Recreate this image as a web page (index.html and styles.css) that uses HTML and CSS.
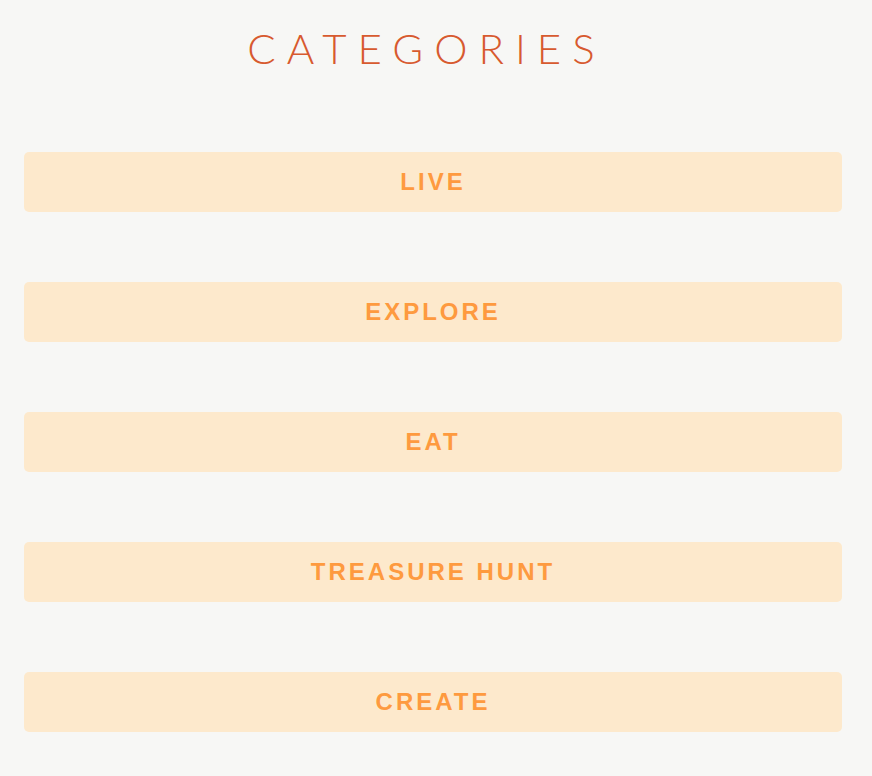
FILE: index.html
```html
<!DOCTYPE html>
<html>

<head>
    <meta name="viewport" content="width=device-width, initial-scale=1.0">
    <link rel="stylesheet" href="styles.css">
</head>

<body>
    <div class="page">
        <h1 class="title">CATEGORIES</h1>
        <div class="category-list">
            <button class="category">LIVE</button>
            <button class="category">EXPLORE</button>
            <button class="category">EAT</button>
            <button class="category">TREASURE HUNT</button>
            <button class="category">CREATE</button>
        </div>
    </div>
</body>

</html>
```
FILE: styles.css
```css
* {
    box-sizing: border-box;
}

html,
body {
    background-color: #f7f7f5;
}

body {
    margin: 0;
    font-family: "Liberation Sans", Arial, sans-serif;
}

.page {
    padding: 0 30px 0 24px;
}

.title {
    margin: 0;
    padding: 24px 13px 0 0;
    height: 152px;
    font-family: Lato, "Open Sans", sans-serif;
    font-weight: 300;
    font-size: 42px;
    line-height: 48px;
    letter-spacing: 11px;
    text-align: center;
    color: #d75a2f;
}

.category-list {
    display: flex;
    flex-direction: column;
    gap: 70px;
}

.category {
    display: block;
    width: 100%;
    height: 60px;
    border: none;
    border-radius: 5px;
    background-color: #fde9cc;
    color: #fe9a3f;
    font-family: "Liberation Sans", Arial, sans-serif;
    font-weight: bold;
    font-size: 24px;
    letter-spacing: 3px;
    padding: 0;
}
```
